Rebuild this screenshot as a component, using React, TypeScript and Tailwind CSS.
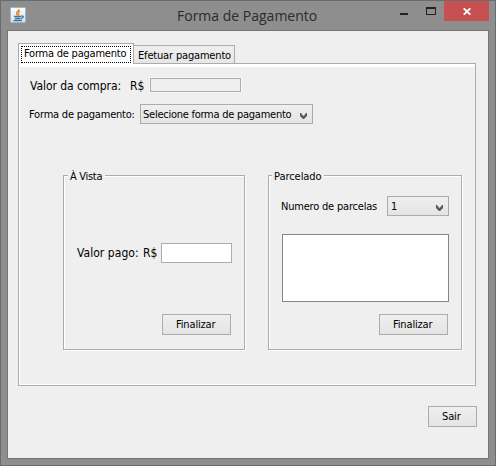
import React, { type ReactNode } from "react";

const Chevron = () => (
  <svg width="9" height="7" viewBox="0 0 9 7" className="shrink-0">
    <path d="M1 0 H2.5 V1 L4.5 3 L6.5 1 V0 H8 V3 L5 6 H4 L1 3 Z" fill="#5a5a5a" />
  </svg>
);

const Button = ({ children, className }: { children: ReactNode; className: string }) => (
  <button
    className={`block h-[21px] border border-[#acacac] bg-linear-to-b from-[#efefef] to-[#e4e4e4] text-left leading-4 ${className}`}
  >
    {children}
  </button>
);

const JavaIcon = () => (
  <svg width="16" height="16" viewBox="0 0 16 16" className="mt-[6px] ml-[9px] shrink-0">
    <defs>
      <linearGradient id="tile" x1="0" y1="0" x2="0" y2="1">
        <stop offset="0" stopColor="#fdfdfd" />
        <stop offset="1" stopColor="#d3e0e9" />
      </linearGradient>
    </defs>
    <rect x="0.5" y="0.5" width="15" height="15" rx="1" fill="url(#tile)" stroke="#9db6c6" />
    <path d="M9 2 C9.4 4 5.8 4.8 6.6 6.6 C6.9 7.3 7.4 7.6 7.4 8.4 M10.2 4.2 C7.8 5.2 8.2 6 8.7 6.8 C9 7.4 8.7 8 8.3 8.5" fill="none" stroke="#e8862e" strokeWidth="1.4" />
    <path d="M4 9.5 H11 M11.2 9.2 C14.4 8.4 13.6 11 11 11.5 M5 11.5 H10.5 M3.5 13.5 H12" fill="none" stroke="#41779b" strokeWidth="1.3" />
  </svg>
);

export default function App() {
  return (
    <div className="flex h-[466px] w-[496px] flex-col border border-[#6b6b6b] bg-[#8e8e8e] font-['DejaVu_Sans_Condensed','DejaVu_Sans',sans-serif] text-[11px] leading-4 text-black">
      <header className="flex h-[29px] shrink-0">
        <JavaIcon />
        <h1 className="mt-[5px] ml-[151px] w-[223px] font-['Open_Sans',sans-serif] text-[14px] leading-5 whitespace-nowrap text-[#2b2b2b]">
          Forma de Pagamento
        </h1>
        <div className="mt-[12px] h-[2px] w-2 bg-[#222222]" />
        <div className="mt-[6px] ml-[18px] h-2 w-[10px] border border-t-2 border-[#222222]" />
        <div className="ml-2 flex h-5 w-[45px] items-center justify-center bg-[#c75050]">
          <svg width="8" height="7" viewBox="0 0 8 7">
            <path d="M0.7 0.3 L7.3 6.7 M7.3 0.3 L0.7 6.7" stroke="#ffffff" strokeWidth="1.8" />
          </svg>
        </div>
      </header>

      <main className="mx-[6px] h-[429px] border border-[#757575] bg-[#efefef] pt-3 pl-[10px]">
        <div className="flex h-5 items-end">
          <div className="h-5 w-[116px] border border-b-0 border-[#acacac] bg-white pt-[2px] pl-[2px]">
            <div className="h-[17px] w-[110px] border border-dotted border-black pl-[2px] leading-[14px] tracking-[-0.22px] whitespace-nowrap">
              Forma de pagamento
            </div>
          </div>
          <div className="h-[18px] w-[101px] border border-b-0 border-l-0 border-[#acacac] bg-linear-to-b from-[#efefef] to-[#e6e6e6] pt-[2px] pl-1 tracking-[-0.17px] whitespace-nowrap">
            Efetuar pagamento
          </div>
        </div>

        <section className="h-[323px] w-[458px] border border-t-0 border-[#acacac]">
          <div className="flex h-1">
            <div className="w-[114px] bg-white" />
            <div className="grow border-t border-[#acacac] bg-white" />
          </div>
          <div className="h-[318px] border-b border-l border-white">
            <div className="flex pt-[11px] pl-[10px] text-[12px]">
              <span className="w-[100px] tracking-[-0.06px] whitespace-nowrap">Valor da compra:</span>
              <span className="w-5">R$</span>
              <div className="h-[14px] w-[91px] border border-[#acacac] shadow-[0_0_0_1px_#f7f7f7]" />
            </div>
            <div className="mt-[10px] flex h-5 pl-[9px]">
              <span className="mt-[3px] w-[111px] tracking-[-0.2px] whitespace-nowrap">Forma de pagamento:</span>
              <div className="flex h-5 w-[173px] border border-[#acacac] bg-linear-to-b from-[#efefef] to-[#e4e4e4] pl-[2px]">
                <span className="mt-[2px] w-[156px] tracking-[-0.25px] whitespace-nowrap">Selecione forma de pagamento</span>
                <div className="pt-2">
                  <Chevron />
                </div>
              </div>
            </div>

            <div className="mt-[44px] flex pl-[43px]">
              <div className="mt-[7px] h-[175px] w-[182px] border border-[#acacac] shadow-[1px_1px_0_#ffffff,inset_1px_1px_0_#ffffff]">
                <div className="-mt-[7px] ml-1 h-4 w-[37px] bg-[#efefef] pl-[2px] tracking-[-0.3px] whitespace-nowrap">À Vista</div>
                <div className="mt-[58px] flex pl-[13px] text-[12px]">
                  <span className="mt-[2px] w-[66px] tracking-[0.05px] whitespace-nowrap">Valor pago:</span>
                  <span className="mt-[2px] w-[18px]">R$</span>
                  <div className="h-5 w-[71px] border border-[#abadb3] bg-white" />
                </div>
                <Button className="mt-[51px] ml-[98px] w-[69px] pl-[13px] tracking-[-0.15px]">Finalizar</Button>
              </div>

              <div className="mt-[7px] ml-[23px] h-[175px] w-[194px] border border-[#acacac] shadow-[1px_1px_0_#ffffff,inset_1px_1px_0_#ffffff]">
                <div className="-mt-[7px] ml-[3px] h-4 w-[52px] bg-[#efefef] pl-[2px] tracking-[-0.05px]">Parcelado</div>
                <div className="mt-[11px] flex h-5 pl-3">
                  <span className="mt-[3px] w-[106px] tracking-[-0.2px] whitespace-nowrap">Numero de parcelas</span>
                  <div className="flex h-5 w-[62px] border border-[#acacac] bg-linear-to-b from-[#efefef] to-[#e4e4e4] pl-[3px]">
                    <span className="mt-[2px] w-[44px]">1</span>
                    <div className="pt-2">
                      <Chevron />
                    </div>
                  </div>
                </div>
                <div className="mt-[18px] ml-[13px] h-[68px] w-[167px] border border-[#828790] bg-white" />
                <Button className="mt-3 ml-[110px] w-[69px] pl-[13px] tracking-[-0.15px]">Finalizar</Button>
              </div>
            </div>
          </div>
        </section>

        <Button className="mt-5 ml-[410px] w-[49px] pl-[13px] tracking-[-0.15px]">Sair</Button>
      </main>
    </div>
  );
}
